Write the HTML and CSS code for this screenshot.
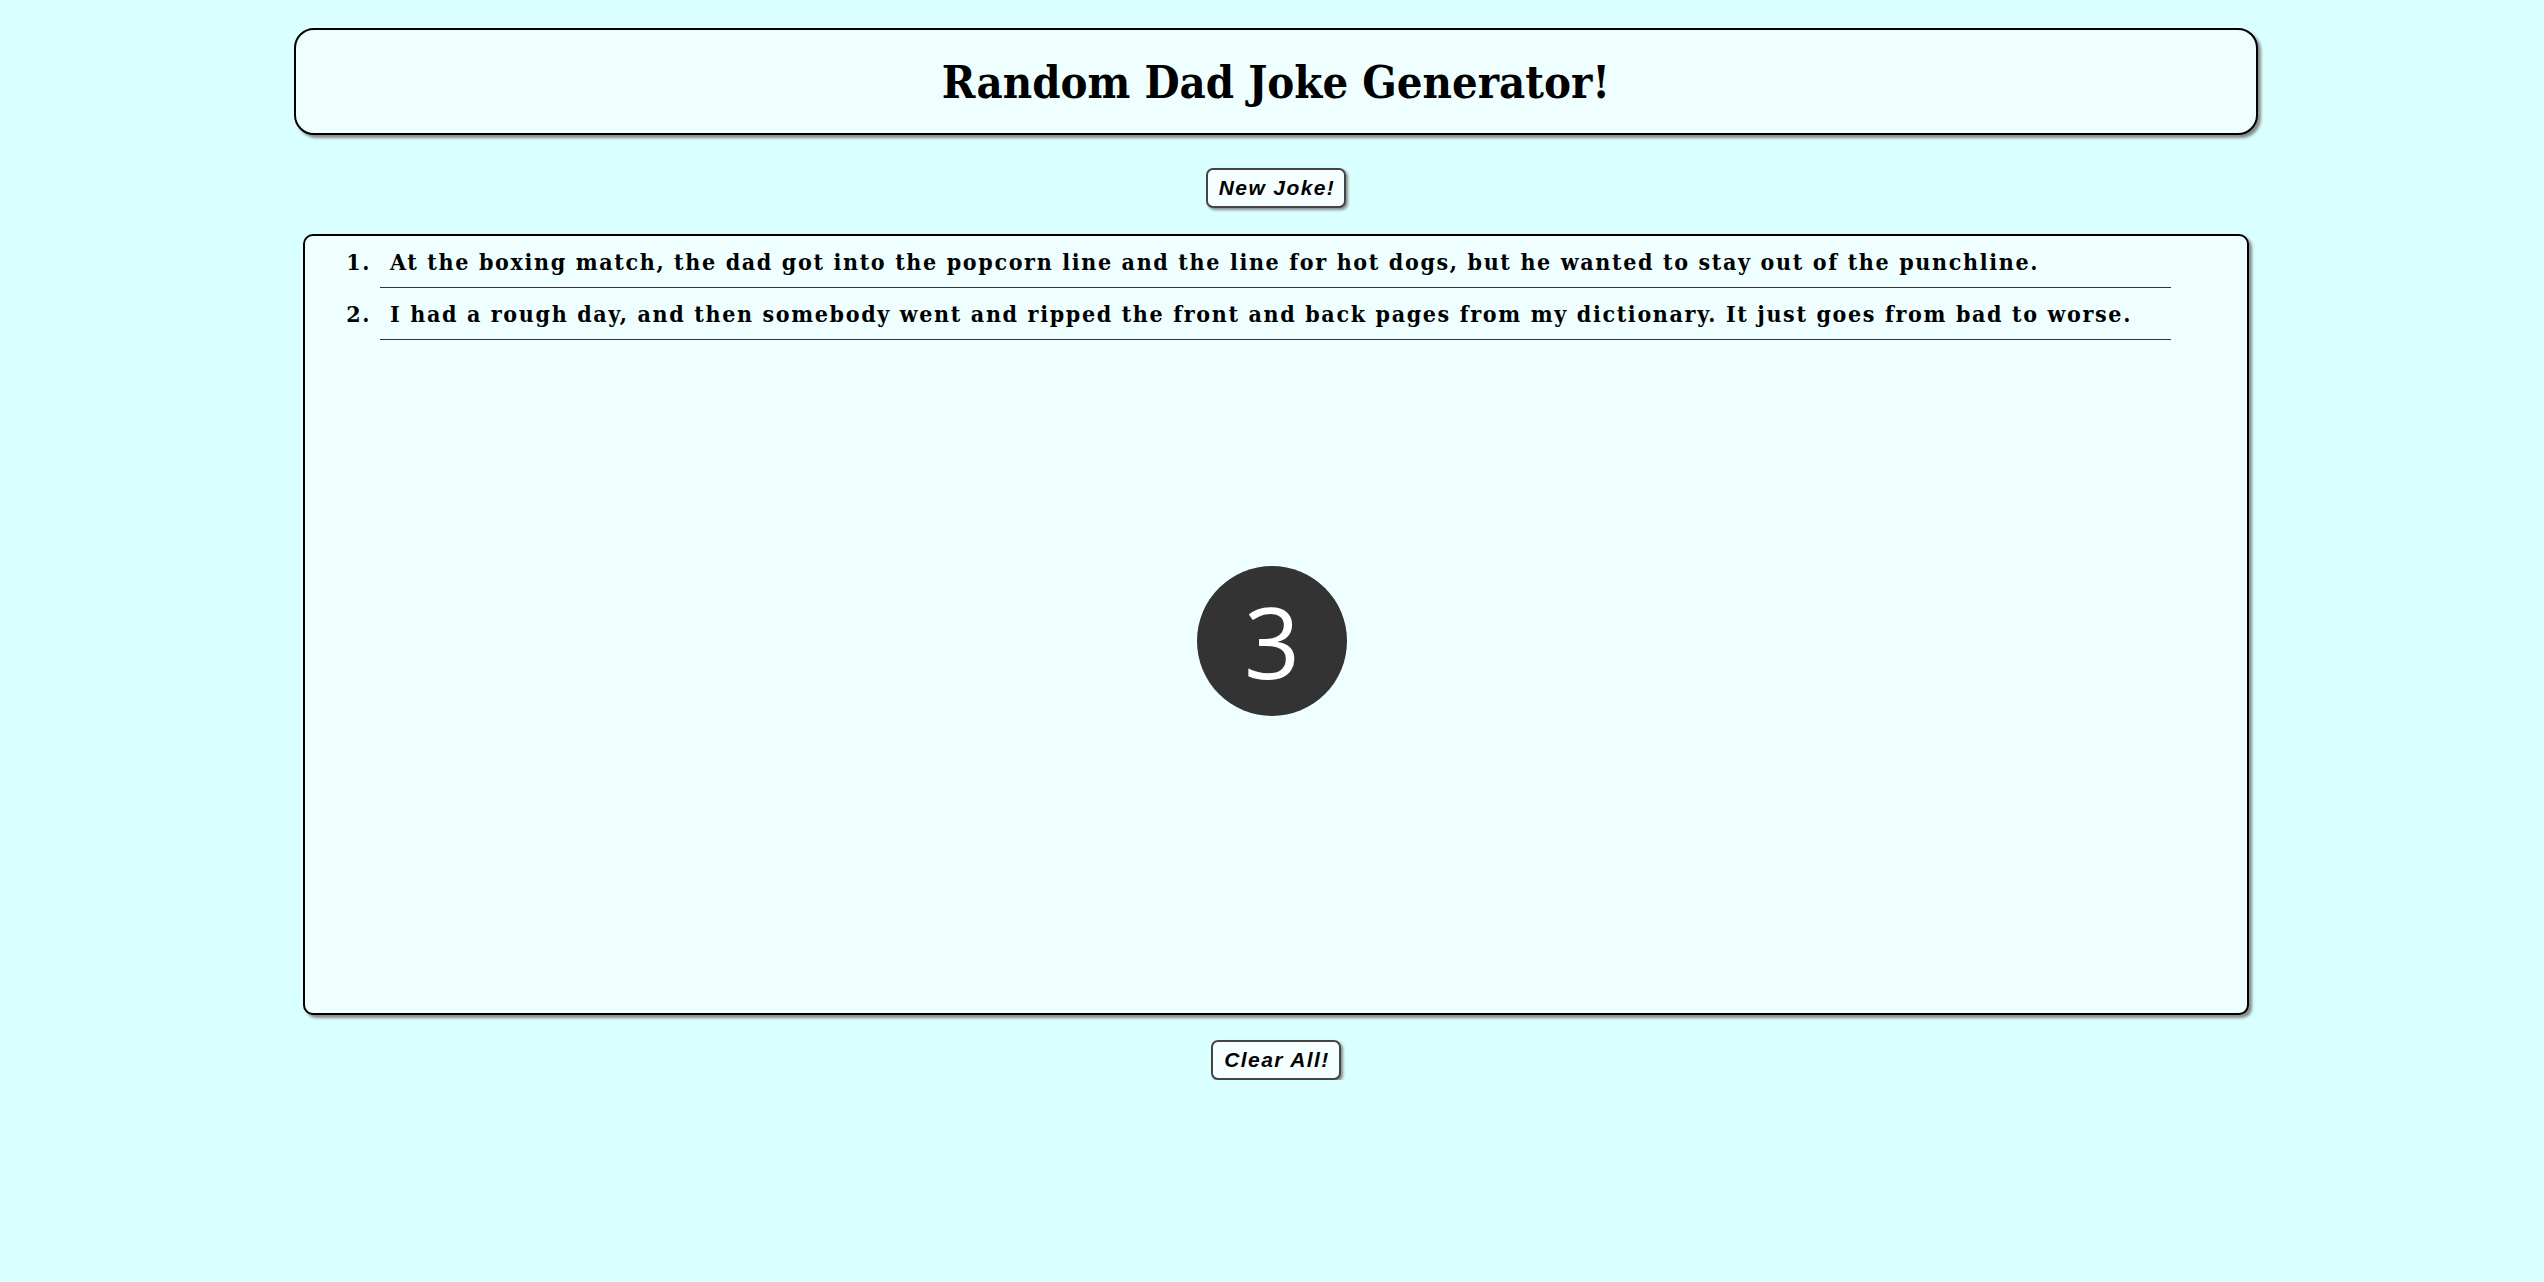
FILE: index.html
```html
<!DOCTYPE html>
<html lang="en">
<head>
<meta charset="utf-8">
<title>Random Dad Joke Generator!</title>
<link rel="stylesheet" href="styles.css">
</head>
<body>
  <header class="title-box">
    <h1 class="title">Random Dad Joke Generator!</h1>
  </header>
  <div class="actions actions-top">
    <button class="btn" type="button">New Joke!</button>
  </div>
  <main class="joke-box">
    <ol class="joke-list">
      <li class="joke">At the boxing match, the dad got into the popcorn line and the line for hot dogs, but he wanted to stay out of the punchline.</li>
      <li class="joke">I had a rough day, and then somebody went and ripped the front and back pages from my dictionary. It just goes from bad to worse.</li>
    </ol>
  </main>
  <div class="actions actions-bottom">
    <button class="btn" type="button">Clear All!</button>
  </div>
  <div class="countdown">3</div>
</body>
</html>
```

FILE: styles.css
```css
html {
  background: #d9ffff;
}

body {
  margin: 8px 0 8px 8px;
  background: #d9ffff;
  font-family: "DejaVu Serif Condensed", "DejaVu Serif", serif;
  color: #000;
}

.title-box {
  box-sizing: border-box;
  width: 1964px;
  height: 107px;
  margin: 20px auto 0;
  border: 2px solid #000;
  border-radius: 20px;
  background: #efffff;
  box-shadow: 3px 3px 3px #8a8a8a;
  display: flex;
  align-items: center;
  justify-content: center;
}

.title {
  margin: 0;
  font-family: "DejaVu Serif Condensed", "DejaVu Serif", serif;
  font-weight: bold;
  font-size: 45px;
  line-height: 1;
  padding-top: 2px;
}

.actions {
  display: flex;
  justify-content: center;
}

.actions-top {
  margin-top: 33px;
}

.actions-bottom {
  margin-top: 25px;
}

.btn {
  box-sizing: border-box;
  height: 40px;
  padding: 0 9px 0 11px;
  border: 2px solid #444;
  border-radius: 7px;
  background: #f5ffff;
  box-shadow: 2px 2px 3px #8a8a8a;
  font-family: "Liberation Sans", Arial, sans-serif;
  font-weight: bold;
  font-style: italic;
  font-size: 21px;
  letter-spacing: 1.4px;
  color: #000;
  cursor: pointer;
}

.joke-box {
  box-sizing: border-box;
  width: 1946px;
  height: 781px;
  margin: 26px auto 0;
  border: 2px solid #000;
  border-radius: 10px;
  background: #efffff;
  box-shadow: 3px 3px 3px #8a8a8a;
}

.joke-list {
  margin: 0;
  padding: 0 76px 0 75px;
}

.joke {
  padding: 10px 0 10px 10px;
  border-bottom: 1px solid #333;
  font-weight: bold;
  font-size: 23px;
  line-height: 31px;
  letter-spacing: 1.65px;
  white-space: nowrap;
}

.countdown {
  position: fixed;
  top: 50%;
  left: 50%;
  width: 150px;
  height: 150px;
  margin: -75px 0 0 -75px;
  border-radius: 50%;
  background: #333;
  color: #fff;
  font-family: "Open Sans", "Noto Sans", sans-serif;
  font-weight: 400;
  font-size: 98px;
  display: flex;
  align-items: center;
  justify-content: center;
  line-height: 1;
}
```
